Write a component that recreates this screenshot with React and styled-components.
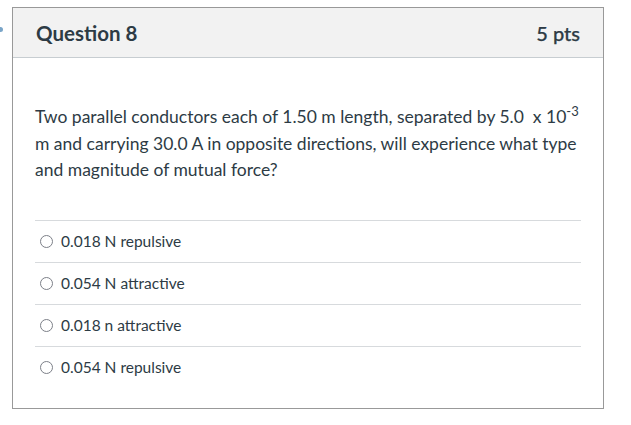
import React from "react";
import styled, { createGlobalStyle } from "styled-components";

const Global = createGlobalStyle`
  html, body { margin: 0; padding: 0; background: #fff; }
  body { font-family: Lato, "Open Sans", sans-serif; color: #2d3b45; }
`;

const Page = styled.div`
  position: relative;
  padding: 7px 27px 0 12px;
`;

const Dot = styled.span`
  position: absolute;
  left: -2px;
  top: 27px;
  width: 5px;
  height: 5px;
  border-radius: 50%;
  background: #7aa5c8;
`;

const Card = styled.section`
  border: 1px solid #999;
  width: 592px;
  height: 402px;
  box-sizing: border-box;
  display: flex;
  flex-direction: column;
`;

const Header = styled.header`
  display: flex;
  align-items: center;
  justify-content: space-between;
  height: 50px;
  padding: 0 23px 0 23px;
  background: #f2f2f2;
  border-bottom: 1px solid #c7cdd1;
  box-sizing: border-box;
`;

const Title = styled.h2`
  margin: 0;
  font-size: 20.5px;
  font-weight: 700;
  color: #2d3b45;
`;

const Points = styled.span`
  font-size: 20px;
  font-weight: 500;
  color: #2d3b45;
  -webkit-text-stroke: 0.25px #2d3b45;
`;

const Body = styled.div`
  padding: 46px 22px 0 22px;
`;

const Prompt = styled.p`
  margin: 0;
  font-size: 17.5px;
  line-height: 26.5px;
  color: #2d3b45;
`;

const Sup = styled.sup`
  font-size: 13px;
  line-height: 0;
  vertical-align: 7px;
`;

const Answers = styled.ul`
  list-style: none;
  margin: 36px 0 0 0;
  padding: 0;
`;

const Answer = styled.li`
  display: flex;
  align-items: center;
  height: 42px;
  border-top: 1px solid #d7dadd;
  box-sizing: border-box;
  padding: 0 0 0 5px;
  gap: 8px;
`;

const Radio = styled.span`
  width: 13px;
  height: 13px;
  border-radius: 50%;
  border: 1.6px solid #7c7f88;
  box-sizing: border-box;
  flex: none;
  margin-top: 1px;
`;

const Label = styled.span`
  font-size: 15.5px;
  color: #2d3b45;
  margin-top: -1px;
`;

const answers = [
  "0.018 N repulsive",
  "0.054 N attractive",
  "0.018 n attractive",
  "0.054 N repulsive",
];

export default function App() {
  return (
    <>
      <Global />
      <Page>
        <Dot />
        <Card>
          <Header>
            <Title>Question 8</Title>
            <Points>5 pts</Points>
          </Header>
          <Body>
            <Prompt>
              Two parallel conductors each of 1.50 m length, separated by 5.0&nbsp; x 10<Sup>-3</Sup> m
              and carrying 30.0 A in opposite directions, will experience what type and magnitude of
              mutual force?
            </Prompt>
            <Answers>
              {answers.map((a) => (
                <Answer key={a}>
                  <Radio />
                  <Label>{a}</Label>
                </Answer>
              ))}
            </Answers>
          </Body>
        </Card>
      </Page>
    </>
  );
}
